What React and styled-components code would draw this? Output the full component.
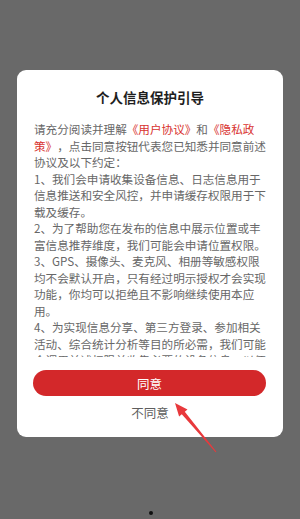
import React from 'react';
import styled, { createGlobalStyle } from 'styled-components';

const GlobalStyle = createGlobalStyle`
  html, body {
    margin: 0;
    padding: 0;
    background: #696969;
  }
  * {
    box-sizing: border-box;
  }
`;

const Screen = styled.div`
  position: relative;
  width: 300px;
  height: 519px;
  background: #696969;
  padding-top: 70px;
  font-family: "Noto Sans CJK SC", "Noto Sans", sans-serif;
  overflow: hidden;
`;

const Dialog = styled.div`
  width: 266px;
  margin-left: 17px;
  background: #ffffff;
  border-radius: 9px;
  padding: 17px 0 14px;
  display: flex;
  flex-direction: column;
`;

const Title = styled.h2`
  margin: 0;
  font-size: 13.5px;
  line-height: 20px;
  font-weight: 700;
  color: #1e1e1e;
  text-align: center;
`;

const Body = styled.div`
  margin-top: 14px;
  height: 236px;
  padding: 0 15px 0 17px;
  overflow-y: auto;
  scrollbar-width: none;
  &::-webkit-scrollbar {
    display: none;
  }
`;

const Para = styled.p`
  margin: 0;
  font-size: 11.6px;
  line-height: 16.5px;
  color: #676767;
  text-align: left;
  text-spacing-trim: space-all;
`;

const Link = styled.span`
  color: #d8322e;
`;

const AgreeButton = styled.button`
  margin: 13px 17px 0 16px;
  height: 26px;
  border: none;
  border-radius: 13px;
  background: #d3282a;
  color: #ffffff;
  font-family: inherit;
  font-size: 12.5px;
  cursor: pointer;
`;

const DisagreeButton = styled.button`
  margin-top: 7px;
  height: 20px;
  border: none;
  background: transparent;
  color: #5e5e5e;
  font-family: inherit;
  font-size: 12.5px;
  line-height: 20px;
  padding: 0;
  cursor: pointer;
`;

const Overlay = styled.svg`
  position: absolute;
  left: 0;
  top: 0;
  pointer-events: none;
`;

const HomeDot = styled.span`
  position: absolute;
  left: 149px;
  top: 511px;
  width: 4px;
  height: 4px;
  border-radius: 50%;
  background: #111;
`;

const lines = [
  '1、我们会申请收集设备信息、日志信息用于信息推送和安全风控，并申请缓存权限用于下载及缓存。',
  '2、为了帮助您在发布的信息中展示位置或丰富信息推荐维度，我们可能会申请位置权限。',
  '3、GPS、摄像头、麦克风、相册等敏感权限均不会默认开启，只有经过明示授权才会实现功能，你均可以拒绝且不影响继续使用本应用。',
  '4、为实现信息分享、第三方登录、参加相关活动、综合统计分析等目的所必需，我们可能会调用前述权限并收集必要的设备信息，以便为您提供更好的服务。',
];

export default function App() {
  return (
    <>
      <GlobalStyle />
      <Screen>
        <Dialog>
          <Title>个人信息保护引导</Title>
          <Body>
            <Para>
              请充分阅读并理解<Link>《用户协议》</Link>和<Link>《隐私政策》</Link>，点击同意按钮代表您已知悉并同意前述协议及以下约定：
            </Para>
            {lines.map((l) => (
              <Para key={l}>{l}</Para>
            ))}
          </Body>
          <AgreeButton>同意</AgreeButton>
          <DisagreeButton>不同意</DisagreeButton>
        </Dialog>
        <Overlay width="300" height="519" viewBox="0 0 300 519">
          <polygon
            points="175,403 187.5,409.5 184.8,411.7 216.4,451.7 215.6,452.3 181.8,414.3 179.1,416.5"
            fill="#e8393c"
          />
        </Overlay>
        <HomeDot />
      </Screen>
    </>
  );
}
